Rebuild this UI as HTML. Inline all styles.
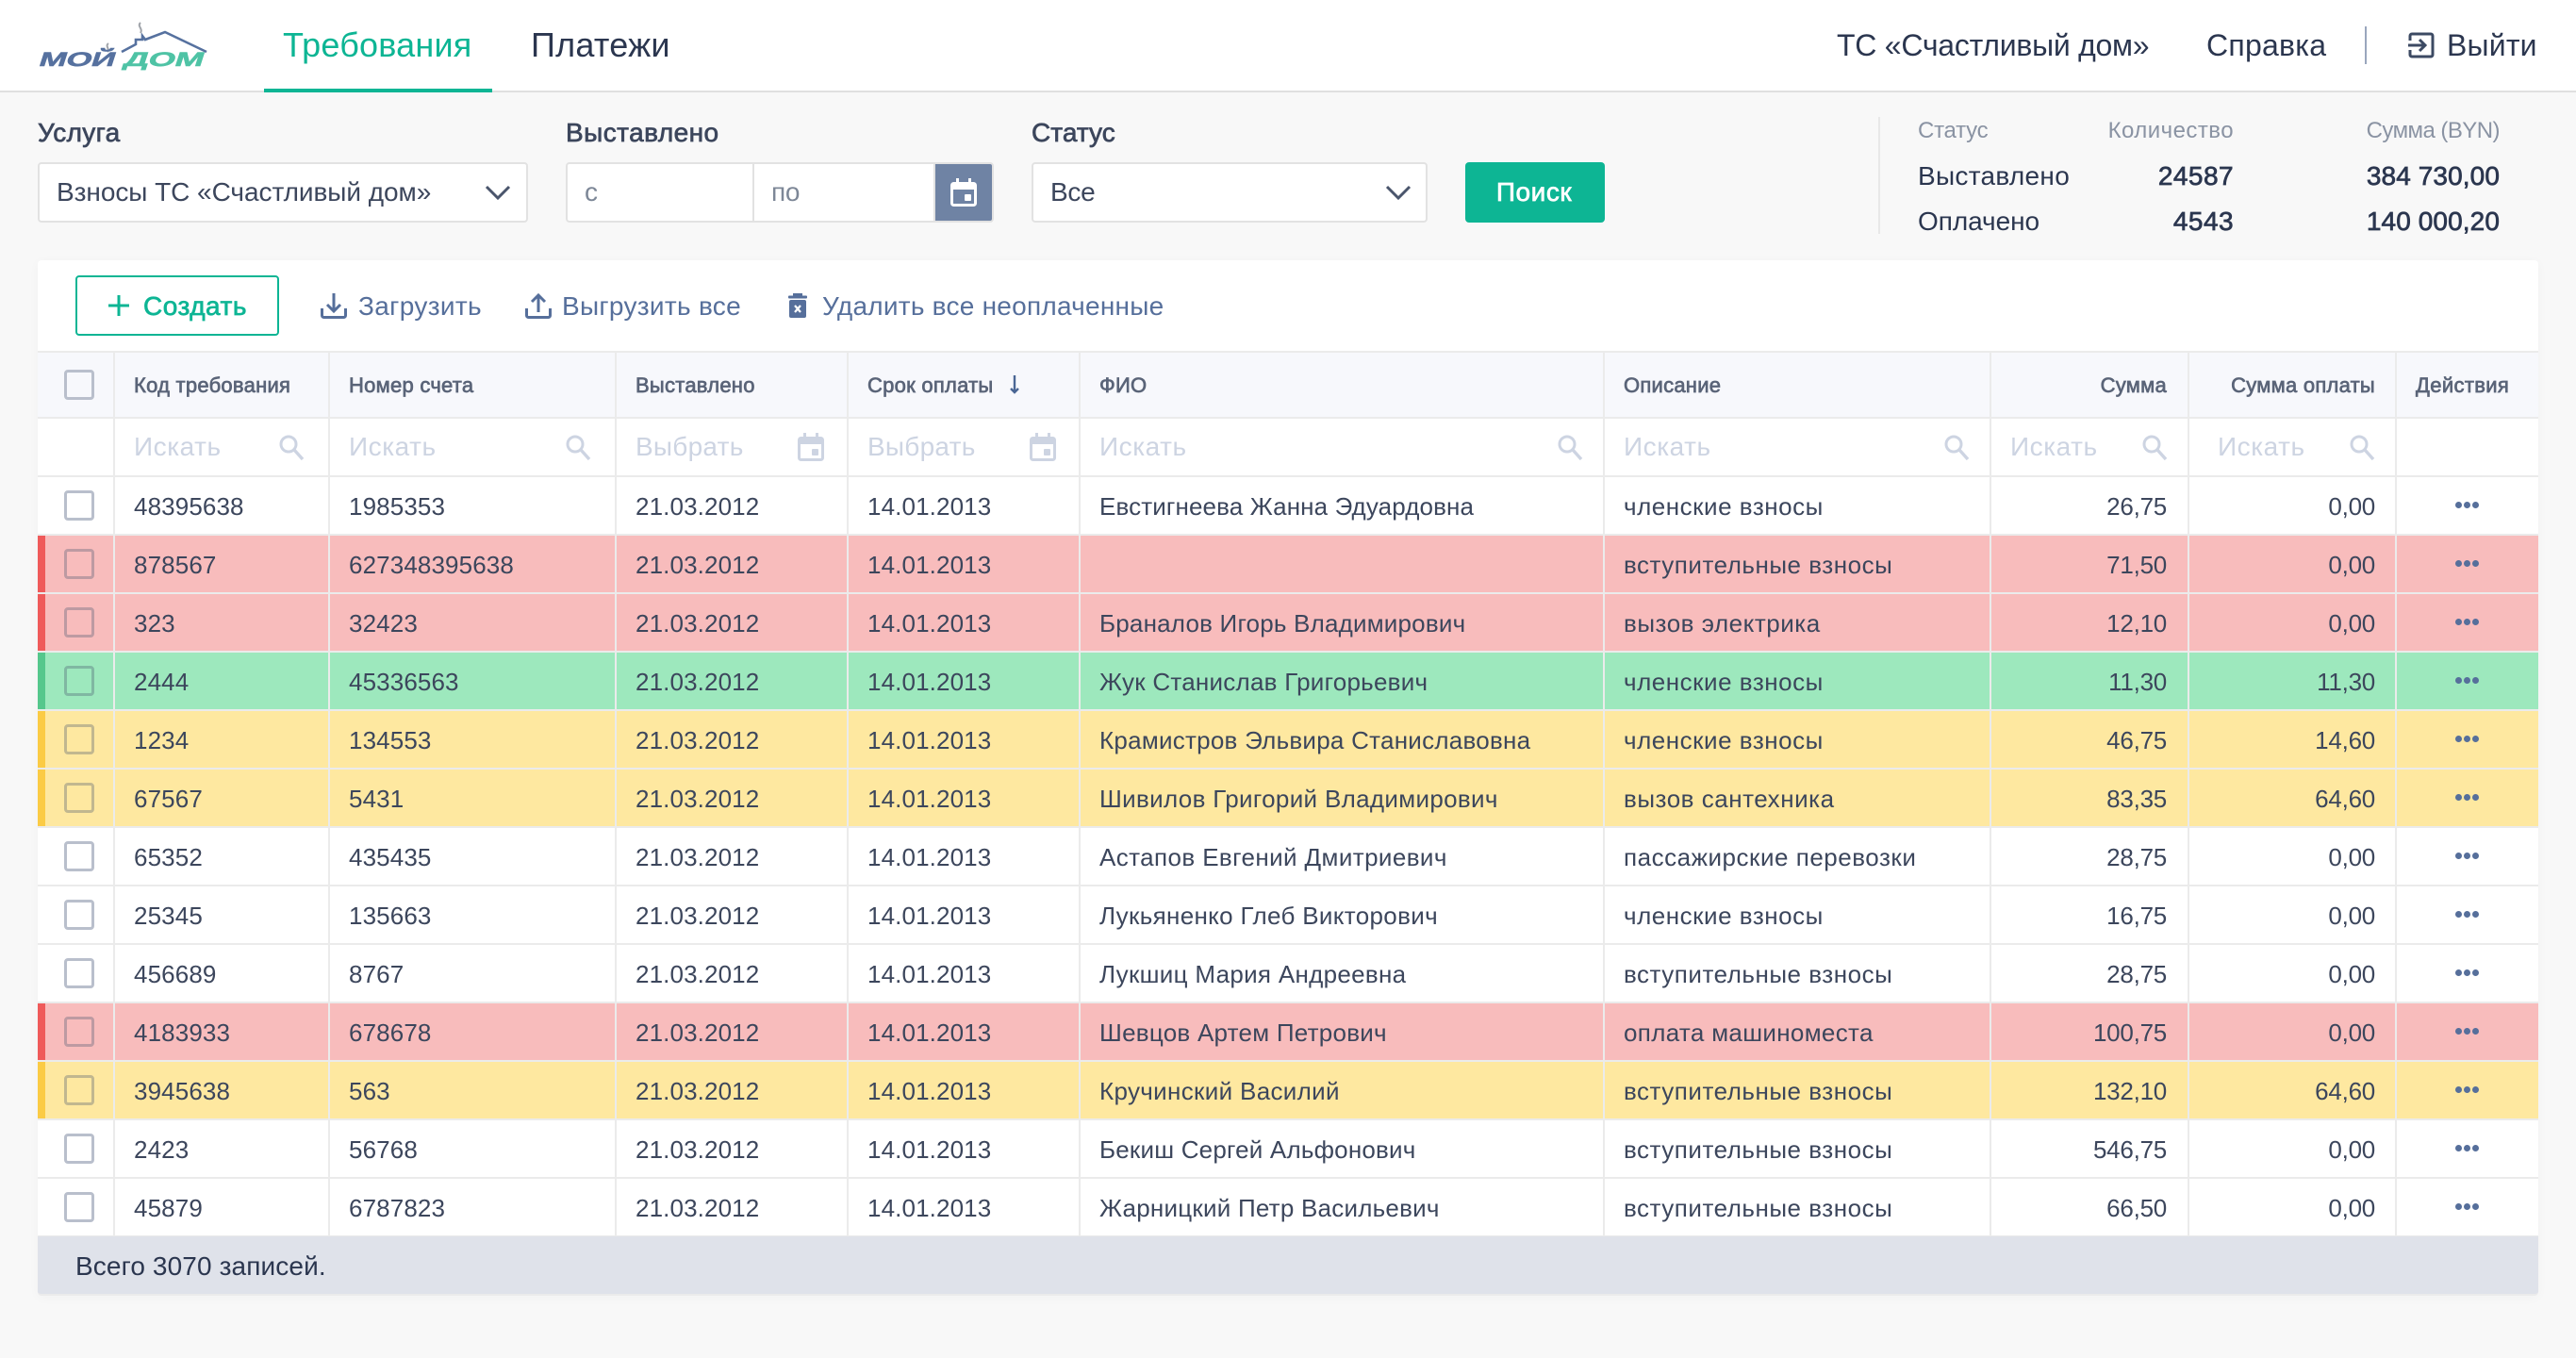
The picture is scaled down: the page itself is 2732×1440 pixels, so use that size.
<!DOCTYPE html>
<html lang="ru">
<head>
<meta charset="utf-8">
<title>Требования</title>
<style>
html,body{margin:0;padding:0}
body{width:2732px;height:1440px;background:#f8f8f8;position:relative;overflow:hidden;font-family:"Liberation Sans","Noto Sans CJK SC",sans-serif;color:#3c465c;letter-spacing:-.25px}
*{box-sizing:border-box}
.t{position:absolute;white-space:nowrap;line-height:40px;height:40px}
.m{-webkit-text-stroke:.7px currentColor}
.rt{text-align:right}
svg{position:absolute;display:block;overflow:visible}
#hd{position:absolute;left:0;top:0;width:2732px;height:98px;background:#fff;border-bottom:2px solid #e0e0e0}
#ul{position:absolute;left:280px;top:94px;width:242px;height:4px;background:#0db594}
.inp{position:absolute;top:172px;height:64px;background:#fff;border:2px solid #e2e2e2;border-radius:4px}
#card{position:absolute;left:40px;top:276px;width:2652px;height:1098px;background:#fff;border-radius:4px;box-shadow:0 2px 12px rgba(0,0,0,.03)}
#thead{position:absolute;left:40px;top:372px;width:2652px;height:72px;background:#f7f8fc;border-top:2px solid #ebebeb;border-bottom:2px solid #ebebeb}
#filt{position:absolute;left:40px;top:444px;width:2652px;height:62px;background:#fff;border-bottom:2px solid #ebebeb}
#rows{position:absolute;left:40px;top:506px;width:2652px}
.r{position:relative;height:62px;background:#fff;border-bottom:2px solid #ebebeb;font-size:26px;letter-spacing:.12px}
.r.x{background:#f8bcbc}
.r.g{background:#9de8bd}
.r.y{background:#fee8a0}
.r.x:before,.r.g:before,.r.y:before{content:"";position:absolute;left:0;top:0;width:8px;height:60px;background:#ef5a5a}
.r.g:before{background:#55c78c}
.r.y:before{background:#fbcb45}
.r span{position:absolute;top:11px;line-height:40px;height:40px;white-space:nowrap}
.cb{position:absolute;left:28px;width:32px;height:32px;border:3px solid #b9bfcc;border-radius:4px;top:14px}
.r.x .cb,.r.g .cb,.r.y .cb{border-color:rgba(70,84,110,.33)}
.a{left:102px}.b{left:330px}.c{left:634px}.d{left:880px}.e{left:1126px;letter-spacing:.3px}.f{left:1682px;letter-spacing:.52px}
.h{right:394px;text-align:right;letter-spacing:-.25px}.k{right:173px;text-align:right;letter-spacing:-.25px}
.dots{position:absolute;left:2573px;top:26px;width:7px;height:7px;border-radius:50%;background:#566f9b;box-shadow:-9px 0 0 #566f9b,9px 0 0 #566f9b}
.vl{position:absolute;top:374px;width:2px;height:936px;background:#ebebeb}
.th{font-size:22px;color:#5a6478;top:389px;letter-spacing:.25px}
.ph{font-size:28px;color:#cdd4e2;top:454px;letter-spacing:.55px}
#foot{position:absolute;left:40px;top:1311px;width:2652px;height:63px;background:#dfe2ea;border-bottom:2px solid #ebebeb;border-radius:0 0 4px 4px}
</style>
</head>
<body>
<svg width="0" height="0" style="position:absolute">
<defs>
<g id="s"><circle cx="10" cy="10" r="8" fill="none" stroke="currentColor" stroke-width="3"/><path d="M16 16l9 10" fill="none" stroke="currentColor" stroke-width="3.4"/></g>
<g id="cal"><path d="M6 0h3v4h10V0h3v4h2.500a3.500 3.500 0 0 1 3.500 3.500v19a3.500 3.500 0 0 1-3.500 3.500h-21A3.500 3.500 0 0 1 0 26.500v-19A3.500 3.500 0 0 1 3.500 4H6zM3 12v14.500a.5.500 0 0 0 .5.500h21a.5.500 0 0 0 .5-.5V12z" fill="currentColor"/><rect x="15" y="17" width="7" height="7" rx="1" fill="currentColor"/></g>
</defs>
</svg>

<div id="hd"></div>
<div id="ul"></div>

<svg style="left:20px;top:10px" width="220" height="70" viewBox="0 0 220 70">
<path d="M109 45l15-8v-5h7v-4l3 4 21-8 44 21" fill="none" stroke="#56719f" stroke-width="2.600"/>
<path d="M129 14c-4 4 3 6 0 11M95 36c-4 3 2 6-1 9" fill="none" stroke="#a0a4aa" stroke-width="2"/>
<text transform="translate(20 60) skewX(-18)" x="0" y="0" font-family="Liberation Sans" font-weight="700" font-size="21" fill="#56719f" stroke="#56719f" stroke-width=".5" textLength="80" lengthAdjust="spacingAndGlyphs">МОЙ</text>
<text transform="translate(110 60) skewX(-18)" x="0" y="0" font-family="Liberation Sans" font-weight="700" font-size="21" fill="#4fc3a5" stroke="#4fc3a5" stroke-width=".5" textLength="84" lengthAdjust="spacingAndGlyphs">ДОМ</text>
</svg>

<div class="t" style="left:300px;top:28px;font-size:36px;color:#0db594;letter-spacing:.2px">Требования</div>
<div class="t" style="left:563px;top:28px;font-size:36px;color:#2b364f;letter-spacing:.25px">Платежи</div>
<div class="t" style="left:1948px;top:28px;font-size:32px;color:#2b364f">ТС «Счастливый дом»</div>
<div class="t" style="left:2340px;top:28px;font-size:32px;color:#2b364f;letter-spacing:.25px">Справка</div>
<div style="position:absolute;left:2508px;top:28px;width:2px;height:40px;background:#9aa6bd"></div>
<svg style="left:2554px;top:34px;color:#3c4a63" width="28" height="28" viewBox="0 0 28 28"><path d="M2 9V4a2 2 0 0 1 2-2h20a2 2 0 0 1 2 2v20a2 2 0 0 1-2 2H4a2 2 0 0 1-2-2v-5" fill="none" stroke="currentColor" stroke-width="3"/><path d="M0 14h18M12 8l6 6-6 6" fill="none" stroke="currentColor" stroke-width="3"/></svg>
<div class="t" style="left:2595px;top:28px;font-size:32px;color:#2b364f;letter-spacing:.2px">Выйти</div>

<div class="t m" style="left:40px;top:121px;font-size:28px;letter-spacing:.35px">Услуга</div>
<div class="inp" style="left:40px;width:520px"></div>
<div class="t" style="left:60px;top:184px;font-size:28px;letter-spacing:-.05px">Взносы ТС «Счастливый дом»</div>
<svg style="left:515px;top:197px" width="26" height="15" viewBox="0 0 26 15"><path d="M1 1l12 12L25 1" fill="none" stroke="#4a556c" stroke-width="3"/></svg>

<div class="t m" style="left:600px;top:121px;font-size:28px;letter-spacing:.45px">Выставлено</div>
<div class="inp" style="left:600px;width:454px"></div>
<div style="position:absolute;left:798px;top:174px;width:2px;height:60px;background:#e2e2e2"></div>
<div style="position:absolute;left:990px;top:174px;width:62px;height:60px;background:#6f83a4;border-left:2px solid #e2e2e2;border-radius:0 2px 2px 0"></div>
<div class="t" style="left:620px;top:184px;font-size:28px;color:#7d8797">с</div>
<div class="t" style="left:818px;top:184px;font-size:28px;color:#7d8797">по</div>
<svg style="left:1008px;top:189px;color:#fff" width="28" height="30" viewBox="0 0 28 30"><use href="#cal"/></svg>

<div class="t m" style="left:1094px;top:121px;font-size:28px;letter-spacing:.05px">Статус</div>
<div class="inp" style="left:1094px;width:420px"></div>
<div class="t" style="left:1114px;top:184px;font-size:28px">Все</div>
<svg style="left:1470px;top:197px" width="26" height="15" viewBox="0 0 26 15"><path d="M1 1l12 12L25 1" fill="none" stroke="#4a556c" stroke-width="3"/></svg>
<div style="position:absolute;left:1554px;top:172px;width:148px;height:64px;background:#0db594;border-radius:4px"></div>
<div class="t m" style="left:1553px;top:184px;width:148px;text-align:center;font-size:28px;color:#fff;letter-spacing:.55px">Поиск</div>

<div style="position:absolute;left:1992px;top:124px;width:2px;height:124px;background:#e8e8e8"></div>
<div class="t" style="left:2034px;top:119px;font-size:24px;color:#8a93a3">Статус</div>
<div class="t rt" style="right:363px;top:119px;font-size:24px;color:#8a93a3;letter-spacing:.45px">Количество</div>
<div class="t rt" style="right:81px;top:119px;font-size:24px;color:#8a93a3;letter-spacing:-.55px">Сумма (BYN)</div>
<div class="t" style="left:2034px;top:167px;font-size:28px;color:#2b364f;letter-spacing:.3px">Выставлено</div>
<div class="t rt m" style="right:363px;top:167px;font-size:28px;color:#2b364f;letter-spacing:.45px">24587</div>
<div class="t rt m" style="right:81px;top:167px;font-size:28px;color:#2b364f;letter-spacing:.1px">384 730,00</div>
<div class="t" style="left:2034px;top:215px;font-size:28px;color:#2b364f;letter-spacing:-.05px">Оплачено</div>
<div class="t rt m" style="right:363px;top:215px;font-size:28px;color:#2b364f;letter-spacing:.45px">4543</div>
<div class="t rt m" style="right:81px;top:215px;font-size:28px;color:#2b364f;letter-spacing:.1px">140 000,20</div>

<div id="card"></div>
<div style="position:absolute;left:80px;top:292px;width:216px;height:64px;border:2px solid #0db594;border-radius:4px"></div>
<svg style="left:115px;top:313px" width="22" height="22" viewBox="0 0 22 22"><path d="M11 0v22M0 11h22" stroke="#0db594" stroke-width="3"/></svg>
<div class="t m" style="left:152px;top:305px;font-size:28px;color:#0db594;letter-spacing:.5px">Создать</div>
<svg style="left:340px;top:311px;color:#566f9b" width="28" height="27" viewBox="0 0 28 27"><path d="M1.500 16v7.500a2 2 0 0 0 2 2h21a2 2 0 0 0 2-2V16" fill="none" stroke="currentColor" stroke-width="3"/><path d="M14 0v19M7 12l7 7 7-7" fill="none" stroke="currentColor" stroke-width="3"/></svg>
<div class="t" style="left:380px;top:305px;font-size:28px;color:#566f9b;letter-spacing:.35px">Загрузить</div>
<svg style="left:557px;top:311px;color:#566f9b" width="28" height="27" viewBox="0 0 28 27"><path d="M1.500 16v7.500a2 2 0 0 0 2 2h21a2 2 0 0 0 2-2V16" fill="none" stroke="currentColor" stroke-width="3"/><path d="M14 20V2M7 9l7-7 7 7" fill="none" stroke="currentColor" stroke-width="3"/></svg>
<div class="t" style="left:596px;top:305px;font-size:28px;color:#566f9b;letter-spacing:.3px">Выгрузить все</div>
<svg style="left:836px;top:311px" width="20" height="26" viewBox="0 0 20 26"><rect x="5" y="0" width="10" height="2.500" fill="#566f9b"/><rect x="0" y="2.500" width="20" height="3" rx="1" fill="#566f9b"/><rect x="1" y="7" width="18" height="19" rx="2" fill="#566f9b"/><path d="M7 13l6 7M13 13l-6 7" stroke="#fff" stroke-width="2.200"/></svg>
<div class="t" style="left:872px;top:305px;font-size:28px;color:#566f9b;letter-spacing:.25px">Удалить все неоплаченные</div>

<div id="thead"></div>
<div id="filt"></div>
<div id="rows">
<div class="r"><i class="cb"></i><span class="a">48395638</span><span class="b">1985353</span><span class="c">21.03.2012</span><span class="d">14.01.2013</span><span class="e" style="letter-spacing:.12px">Евстигнеева Жанна Эдуардовна</span><span class="f">членские взносы</span><span class="h">26,75</span><span class="k">0,00</span><u class="dots"></u></div>
<div class="r x"><i class="cb"></i><span class="a">878567</span><span class="b">627348395638</span><span class="c">21.03.2012</span><span class="d">14.01.2013</span><span class="f">вступительные взносы</span><span class="h">71,50</span><span class="k">0,00</span><u class="dots"></u></div>
<div class="r x"><i class="cb"></i><span class="a">323</span><span class="b">32423</span><span class="c">21.03.2012</span><span class="d">14.01.2013</span><span class="e" style="letter-spacing:.2px">Браналов Игорь Владимирович</span><span class="f">вызов электрика</span><span class="h">12,10</span><span class="k">0,00</span><u class="dots"></u></div>
<div class="r g"><i class="cb"></i><span class="a">2444</span><span class="b">45336563</span><span class="c">21.03.2012</span><span class="d">14.01.2013</span><span class="e" style="letter-spacing:.25px">Жук Станислав Григорьевич</span><span class="f">членские взносы</span><span class="h">11,30</span><span class="k">11,30</span><u class="dots"></u></div>
<div class="r y"><i class="cb"></i><span class="a">1234</span><span class="b">134553</span><span class="c">21.03.2012</span><span class="d">14.01.2013</span><span class="e" style="letter-spacing:.25px">Крамистров Эльвира Станиславовна</span><span class="f">членские взносы</span><span class="h">46,75</span><span class="k">14,60</span><u class="dots"></u></div>
<div class="r y"><i class="cb"></i><span class="a">67567</span><span class="b">5431</span><span class="c">21.03.2012</span><span class="d">14.01.2013</span><span class="e" style="letter-spacing:.33px">Шивилов Григорий Владимирович</span><span class="f">вызов сантехника</span><span class="h">83,35</span><span class="k">64,60</span><u class="dots"></u></div>
<div class="r"><i class="cb"></i><span class="a">65352</span><span class="b">435435</span><span class="c">21.03.2012</span><span class="d">14.01.2013</span><span class="e" style="letter-spacing:.4px">Астапов Евгений Дмитриевич</span><span class="f">пассажирские перевозки</span><span class="h">28,75</span><span class="k">0,00</span><u class="dots"></u></div>
<div class="r"><i class="cb"></i><span class="a">25345</span><span class="b">135663</span><span class="c">21.03.2012</span><span class="d">14.01.2013</span><span class="e" style="letter-spacing:.33px">Лукьяненко Глеб Викторович</span><span class="f">членские взносы</span><span class="h">16,75</span><span class="k">0,00</span><u class="dots"></u></div>
<div class="r"><i class="cb"></i><span class="a">456689</span><span class="b">8767</span><span class="c">21.03.2012</span><span class="d">14.01.2013</span><span class="e" style="letter-spacing:.3px">Лукшиц Мария Андреевна</span><span class="f">вступительные взносы</span><span class="h">28,75</span><span class="k">0,00</span><u class="dots"></u></div>
<div class="r x"><i class="cb"></i><span class="a">4183933</span><span class="b">678678</span><span class="c">21.03.2012</span><span class="d">14.01.2013</span><span class="e" style="letter-spacing:.25px">Шевцов Артем Петрович</span><span class="f" style="letter-spacing:.33px">оплата машиноместа</span><span class="h">100,75</span><span class="k">0,00</span><u class="dots"></u></div>
<div class="r y"><i class="cb"></i><span class="a">3945638</span><span class="b">563</span><span class="c">21.03.2012</span><span class="d">14.01.2013</span><span class="e" style="letter-spacing:.33px">Кручинский Василий</span><span class="f">вступительные взносы</span><span class="h">132,10</span><span class="k">64,60</span><u class="dots"></u></div>
<div class="r"><i class="cb"></i><span class="a">2423</span><span class="b">56768</span><span class="c">21.03.2012</span><span class="d">14.01.2013</span><span class="e" style="letter-spacing:.2px">Бекиш Сергей Альфонович</span><span class="f">вступительные взносы</span><span class="h">546,75</span><span class="k">0,00</span><u class="dots"></u></div>
<div class="r"><i class="cb"></i><span class="a">45879</span><span class="b">6787823</span><span class="c">21.03.2012</span><span class="d">14.01.2013</span><span class="e" style="letter-spacing:.23px">Жарницкий Петр Васильевич</span><span class="f">вступительные взносы</span><span class="h">66,50</span><span class="k">0,00</span><u class="dots"></u></div>
</div>

<div class="vl" style="left:120px"></div>
<div class="vl" style="left:348px"></div>
<div class="vl" style="left:652px"></div>
<div class="vl" style="left:898px"></div>
<div class="vl" style="left:1144px"></div>
<div class="vl" style="left:1700px"></div>
<div class="vl" style="left:2110px"></div>
<div class="vl" style="left:2320px"></div>
<div class="vl" style="left:2540px"></div>

<div style="position:absolute;left:68px;top:392px;width:32px;height:32px;border:3px solid #b9bfcc;border-radius:4px"></div>
<div class="t th m" style="left:142px">Код требования</div>
<div class="t th m" style="left:370px">Номер счета</div>
<div class="t th m" style="left:674px">Выставлено</div>
<div class="t th m" style="left:920px">Срок оплаты</div>
<svg style="left:1071px;top:398px" width="10" height="20" viewBox="0 0 10 20"><path d="M5 0v18M1 14l4 4 4-4" fill="none" stroke="#4a6694" stroke-width="2.400"/></svg>
<div class="t th m" style="left:1166px">ФИО</div>
<div class="t th m" style="left:1722px">Описание</div>
<div class="t th m rt" style="right:434px">Сумма</div>
<div class="t th m rt" style="right:213px">Сумма оплаты</div>
<div class="t th m" style="left:2562px;letter-spacing:.35px">Действия</div>

<div class="t ph" style="left:142px">Искать</div>
<div class="t ph" style="left:370px">Искать</div>
<div class="t ph" style="left:674px;letter-spacing:.25px">Выбрать</div>
<div class="t ph" style="left:920px;letter-spacing:.25px">Выбрать</div>
<div class="t ph" style="left:1166px">Искать</div>
<div class="t ph" style="left:1722px">Искать</div>
<div class="t ph" style="left:2132px">Искать</div>
<div class="t ph" style="left:2352px">Искать</div>

<svg style="left:296px;top:461px;color:#cdd4e2" width="26" height="26" viewBox="0 0 26 26"><use href="#s"/></svg>
<svg style="left:600px;top:461px;color:#cdd4e2" width="26" height="26" viewBox="0 0 26 26"><use href="#s"/></svg>
<svg style="left:1652px;top:461px;color:#cdd4e2" width="26" height="26" viewBox="0 0 26 26"><use href="#s"/></svg>
<svg style="left:2062px;top:461px;color:#cdd4e2" width="26" height="26" viewBox="0 0 26 26"><use href="#s"/></svg>
<svg style="left:2272px;top:461px;color:#cdd4e2" width="26" height="26" viewBox="0 0 26 26"><use href="#s"/></svg>
<svg style="left:2492px;top:461px;color:#cdd4e2" width="26" height="26" viewBox="0 0 26 26"><use href="#s"/></svg>
<svg style="left:846px;top:459px;color:#cdd4e2" width="28" height="30" viewBox="0 0 28 30"><use href="#cal"/></svg>
<svg style="left:1092px;top:459px;color:#cdd4e2" width="28" height="30" viewBox="0 0 28 30"><use href="#cal"/></svg>

<div id="foot"></div>
<div class="t" style="left:80px;top:1323px;font-size:28px;color:#2b364f;letter-spacing:.12px">Всего 3070 записей.</div>
</body>
</html>
